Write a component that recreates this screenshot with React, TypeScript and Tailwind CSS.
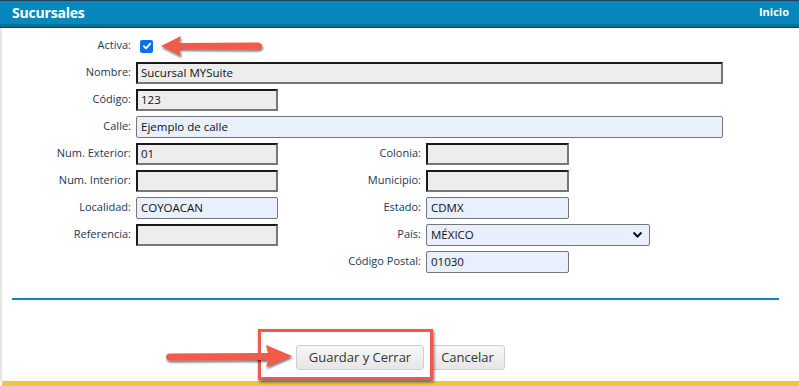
import React from "react";

const lbl = "text-right text-[11px] leading-[20px] text-[#1d3652] whitespace-nowrap";
const grayIn =
  "h-[22px] bg-[#ededed] border-2 border-t-[#1a1a1a] border-l-[#1a1a1a] border-r-[#777777] border-b-[#777777] pl-[3px] text-[11.5px] leading-[18px] text-[#111] box-border";
const blueIn =
  "h-[22px] bg-[#e8f0fe] border border-[#767676] rounded-[2px] pl-[4px] text-[11.5px] leading-[20px] text-[#111] box-border";

function Field({ v, blue, w }: { v?: string; blue?: boolean; w: string }) {
  return <div className={`${blue ? blueIn : grayIn} ${w}`}>{v}</div>;
}

export default function App() {
  return (
    <div
      className="relative w-[799px] h-[386px] bg-white overflow-hidden flex flex-col"
      style={{ fontFamily: '"Open Sans", "Noto Sans", sans-serif' }}
    >
      {/* header */}
      <div className="h-[28px] flex flex-col shrink-0">
        <div className="h-[1px] bg-[#1f3f55]" />
        <div className="flex-1 bg-[#0787bb] flex items-center justify-between pl-[12px] pr-[10px]">
          <span className="text-white font-bold text-[14px] tracking-[-0.2px]">Sucursales</span>
          <span className="text-white font-bold text-[11px]">Inicio</span>
        </div>
        <div className="h-[3px] bg-[#0a6f98]" />
        <div className="h-[1px] bg-[#1d3a4e]" />
      </div>

      <div className="flex-1 flex border-l-2 border-[#e6e6e6]">
        <div className="flex-1 flex flex-col">
          <div className="pt-[7px] grid grid-cols-[129px_142px_138px_1fr] gap-x-[5px] gap-y-[5px] auto-rows-[22px]">
            <div className={lbl}>Activa:</div>
            <div className="col-span-3 flex items-center pl-[4px]">
              <div className="w-[13px] h-[13px] rounded-[2px] bg-[#0b6ff0] flex items-center justify-center">
                <svg width="10" height="10" viewBox="0 0 10 10">
                  <path d="M1.8 5.2 L4 7.4 L8.3 2.6" stroke="white" strokeWidth="1.8" fill="none" strokeLinecap="round" strokeLinejoin="round" />
                </svg>
              </div>
            </div>

            <div className={lbl}>Nombre:</div>
            <div className="col-span-3"><Field v="Sucursal MYSuite" w="w-[587px]" /></div>

            <div className={lbl}>Código:</div>
            <div className="col-span-3"><Field v="123" w="w-[142px]" /></div>

            <div className={lbl}>Calle:</div>
            <div className="col-span-3"><Field v="Ejemplo de calle" blue w="w-[587px]" /></div>

            <div className={lbl}>Num. Exterior:</div>
            <Field v="01" w="w-[142px]" />
            <div className={lbl}>Colonia:</div>
            <Field w="w-[143px]" />

            <div className={lbl}>Num. Interior:</div>
            <Field w="w-[142px]" />
            <div className={lbl}>Municipio:</div>
            <Field w="w-[143px]" />

            <div className={lbl}>Localidad:</div>
            <Field v="COYOACAN" blue w="w-[142px]" />
            <div className={lbl}>Estado:</div>
            <Field v="CDMX" blue w="w-[143px]" />

            <div className={lbl}>Referencia:</div>
            <Field w="w-[142px]" />
            <div className={lbl}>País:</div>
            <div className="w-[224px] h-[22px] bg-[#e8f0fe] border border-[#767676] rounded-[2px] pl-[4px] pr-[6px] flex items-center justify-between text-[11.5px] text-[#111] box-border">
              <span>MÉXICO</span>
              <svg width="11" height="8" viewBox="0 0 11 8">
                <path d="M1.5 1.5 L5.5 5.5 L9.5 1.5" stroke="#111" strokeWidth="2" fill="none" />
              </svg>
            </div>

            <div />
            <div />
            <div className={lbl}>Código Postal:</div>
            <Field v="01030" blue w="w-[143px]" />
          </div>

          <div className="mt-[25px] mx-[10px] h-[2px] bg-[#0a87bb] w-[767px]" />

          <div className="mt-[45px] flex pl-[294px] gap-[6px]">
            <button className="h-[25px] w-[128px] rounded-[3px] border border-[#cfcfcf] bg-gradient-to-b from-[#f7f7f7] to-[#e6e6e6] text-[13px] text-[#333]">
              Guardar y Cerrar
            </button>
            <button className="h-[25px] w-[75px] rounded-[3px] border border-[#cfcfcf] bg-gradient-to-b from-[#f7f7f7] to-[#e6e6e6] text-[13px] text-[#333]">
              Cancelar
            </button>
          </div>
        </div>
      </div>

      <div className="h-[5px] bg-[#ebc93f] ml-[2px] shrink-0" />

      {/* annotation: arrow to checkbox */}
      <svg className="absolute left-[155px] top-[33px]" width="115" height="28" viewBox="0 0 115 28">
        <defs>
          <filter id="sh" x="-20%" y="-50%" width="140%" height="200%">
            <feDropShadow dx="1" dy="2" stdDeviation="1.2" floodColor="#000" floodOpacity="0.55" />
          </filter>
        </defs>
        <g filter="url(#sh)">
          <path d="M6 13 L26 3 L24 10 L102 9.5 Q107 9.5 107 13 Q107 16.5 102 16.5 L24 16 L26 23 Z" fill="#f25a4a" />
        </g>
      </svg>

      {/* annotation: red box */}
      <div className="absolute left-[258px] top-[329px] w-[175px] h-[51px] border-[3px] border-[#f0594b] shadow-[1px_2px_3px_rgba(0,0,0,0.6)]" />

      {/* annotation: arrow to button */}
      <svg className="absolute left-[160px] top-[342px]" width="140" height="30" viewBox="0 0 140 30">
        <defs>
          <filter id="sh2" x="-20%" y="-50%" width="140%" height="200%">
            <feDropShadow dx="1" dy="2" stdDeviation="1.2" floodColor="#000" floodOpacity="0.55" />
          </filter>
        </defs>
        <g filter="url(#sh2)">
          <path d="M10 11.5 L108 11 L106 3 L132 14 L106 25 L108 18 L10 18.5 Q6 18.5 6 15 Q6 11.5 10 11.5 Z" fill="#f25a4a" />
        </g>
      </svg>
    </div>
  );
}
